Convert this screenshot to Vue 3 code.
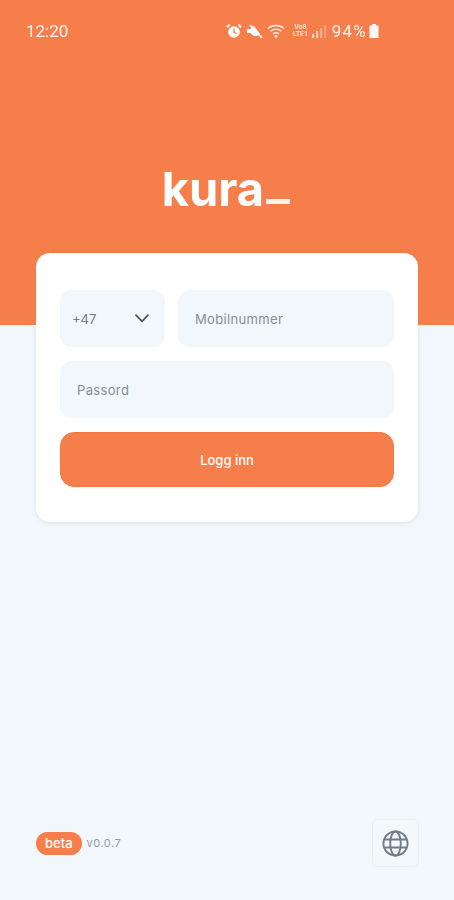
<template>
  <div class="screen">
    <div class="hero">
      <div class="status">
        <span class="time">12:20</span>
        <div class="status-icons">
          <svg width="16" height="16" viewBox="0 0 16 16" class="ic alarm">
            <circle cx="8" cy="9" r="5.8" fill="#fff" />
            <path d="M1 4.2 3.6 1.6M15 4.2 12.4 1.6" stroke="#fff" stroke-width="2" fill="none" />
            <path d="M8 5.5V9.3L10.4 10.6" stroke="#f67e4a" stroke-width="1.3" fill="none" />
          </svg>
          <svg width="17" height="16" viewBox="0 0 17 16" class="ic mute">
            <path d="M1 6H4L8 3 14 11 11 13H8L4 10H1Z" fill="#fff" />
            <path d="M4 2 16 15" stroke="#fff" stroke-width="1.8" />
          </svg>
          <svg width="18" height="16" viewBox="0 0 18 16" class="ic wifi">
            <path d="M1 5.5C5.3 1.5 12.7 1.5 17 5.5M3.5 8.3C6.8 5.5 11.2 5.5 14.5 8.3M6 11C8 9.4 10 9.4 12 11" stroke="#fff" stroke-width="1.4" fill="none" opacity=".85" />
            <circle cx="9" cy="13.3" r="1.3" fill="#fff" />
          </svg>
          <span class="volte">Vo8<br />LTE1</span>
          <svg width="15" height="14" viewBox="0 0 15 14" class="ic signal">
            <rect x="0" y="10" width="2.2" height="4" fill="#fff" opacity=".8" />
            <rect x="4" y="7" width="2.2" height="7" fill="#fff" opacity=".6" />
            <rect x="8" y="4" width="2.2" height="10" fill="#fff" opacity=".35" />
            <rect x="12" y="1" width="2.2" height="13" fill="#fff" opacity=".25" />
          </svg>
          <span class="battery-text">94%</span>
          <svg width="10" height="14" viewBox="0 0 10 14" class="ic">
            <path d="M3 0H7V1.5H9.5V14H.5V1.5H3Z" fill="#fff" opacity=".95" />
          </svg>
        </div>
      </div>
      <div class="logo">
        <span class="logo-word">kura</span>
        <span class="logo-bar"></span>
      </div>
    </div>

    <form class="card" @submit.prevent>
      <div class="row">
        <div class="field country">
          <span class="country-code">{{ country }}</span>
          <svg width="14" height="9" viewBox="0 0 14 9">
            <path d="M1 1.2 7 7.4l6-6.2" stroke="#4b5563" stroke-width="1.7" fill="none" stroke-linecap="round" stroke-linejoin="round" />
          </svg>
        </div>
        <div class="field phone">Mobilnummer</div>
      </div>
      <div class="field password">Passord</div>
      <button class="login" type="submit">Logg inn</button>
    </form>

    <div class="footer">
      <div class="version">
        <span class="beta">beta</span>
        <span class="num">v0.0.7</span>
      </div>
      <button class="lang" type="button" aria-label="Språk">
        <svg width="27" height="27" viewBox="0 0 28 28" fill="none" stroke="#737b87" stroke-width="2">
          <circle cx="14" cy="14" r="12.5" />
          <ellipse cx="14" cy="14" rx="5.5" ry="12.5" />
          <path d="M3 9.8H25M3 18.2H25" />
        </svg>
      </button>
    </div>
  </div>
</template>

<script setup>
import { ref } from 'vue';

const country = ref('+47');
</script>

<style>
body {
  margin: 0;
  background: #f1f7fa;
}
</style>

<style scoped>
.screen {
  display: flex;
  flex-direction: column;
  width: 454px;
  height: 900px;
  overflow: hidden;
  background: #f1f7fa;
  font-family: Inter, "Noto Sans", sans-serif;
}

.hero {
  height: 325px;
  flex: none;
  box-sizing: border-box;
  padding: 20px 0 0;
  background: #f67e4a;
  color: #fff;
}

.status {
  display: flex;
  justify-content: space-between;
  align-items: center;
  height: 22px;
  padding: 0 75px 0 26px;
  font-family: Roboto, sans-serif;
}

.time {
  font-size: 17px;
  opacity: 0.92;
  filter: blur(0.4px);
}

.status-icons {
  display: flex;
  align-items: center;
  filter: blur(0.5px);
}

.ic {
  flex: none;
}

.alarm {
  margin-right: 4px;
}

.mute {
  margin-right: 4px;
}

.wifi {
  margin-right: 7px;
}

.volte {
  width: 17px;
  margin-right: 3px;
  font-size: 7px;
  font-weight: 700;
  line-height: 7px;
  text-align: center;
  opacity: 0.8;
}

.signal {
  margin-right: 5px;
}

.battery-text {
  margin-right: 2px;
  font-size: 17px;
  letter-spacing: 1.2px;
  opacity: 0.92;
}

.logo {
  display: flex;
  align-items: flex-end;
  justify-content: center;
  gap: 2px;
  margin-top: 124px;
  margin-left: -2px;
}

.logo-word {
  font-size: 47px;
  font-weight: 700;
  line-height: 46px;
  letter-spacing: 0;
  filter: blur(0.4px);
}

.logo-bar {
  width: 24px;
  height: 5px;
  margin-bottom: 8px;
  background: #fff;
  opacity: 0.9;
}

.card {
  flex: none;
  display: flex;
  flex-direction: column;
  gap: 14px;
  box-sizing: border-box;
  height: 269px;
  margin: -72px 36px 0;
  padding: 37px 24px 0;
  background: #fff;
  border-radius: 14px;
  box-shadow: 0 1px 4px rgba(100, 120, 135, 0.14);
}

.row {
  display: flex;
  gap: 13px;
}

.field {
  display: flex;
  align-items: center;
  box-sizing: border-box;
  height: 57px;
  background: #f1f7fa;
  border-radius: 12px;
  font-size: 13px;
  letter-spacing: 0.35px;
  color: #868d96;
}

.country {
  flex: none;
  justify-content: space-between;
  width: 105px;
  padding: 0 16px 0 12px;
  letter-spacing: 0;
}

.country-code {
  color: #737b85;
}

.phone {
  flex: 1;
  padding-left: 17px;
}

.password {
  padding-left: 17px;
}

.login {
  height: 55px;
  padding: 0;
  border: 1px solid #f5783f;
  border-radius: 14px;
  background: #f67e4a;
  color: #fff;
  font-family: inherit;
  font-size: 13px;
  font-weight: 500;
}

.footer {
  display: flex;
  justify-content: space-between;
  align-items: center;
  margin-top: auto;
  padding: 0 35px 33px 36px;
}

.version {
  display: flex;
  align-items: center;
  gap: 5px;
}

.beta {
  padding: 0 9px;
  height: 23px;
  line-height: 23px;
  border-radius: 12px;
  background: #f67e4a;
  color: #fff;
  font-size: 13px;
  font-weight: 500;
}

.num {
  font-size: 11px;
  letter-spacing: 0.5px;
  color: #9299a1;
}

.lang {
  display: flex;
  align-items: center;
  justify-content: center;
  width: 47px;
  height: 48px;
  padding: 0;
  box-sizing: border-box;
  border: 1px solid #e8eef1;
  border-radius: 6px;
  background: #f3f8fb;
}
</style>
